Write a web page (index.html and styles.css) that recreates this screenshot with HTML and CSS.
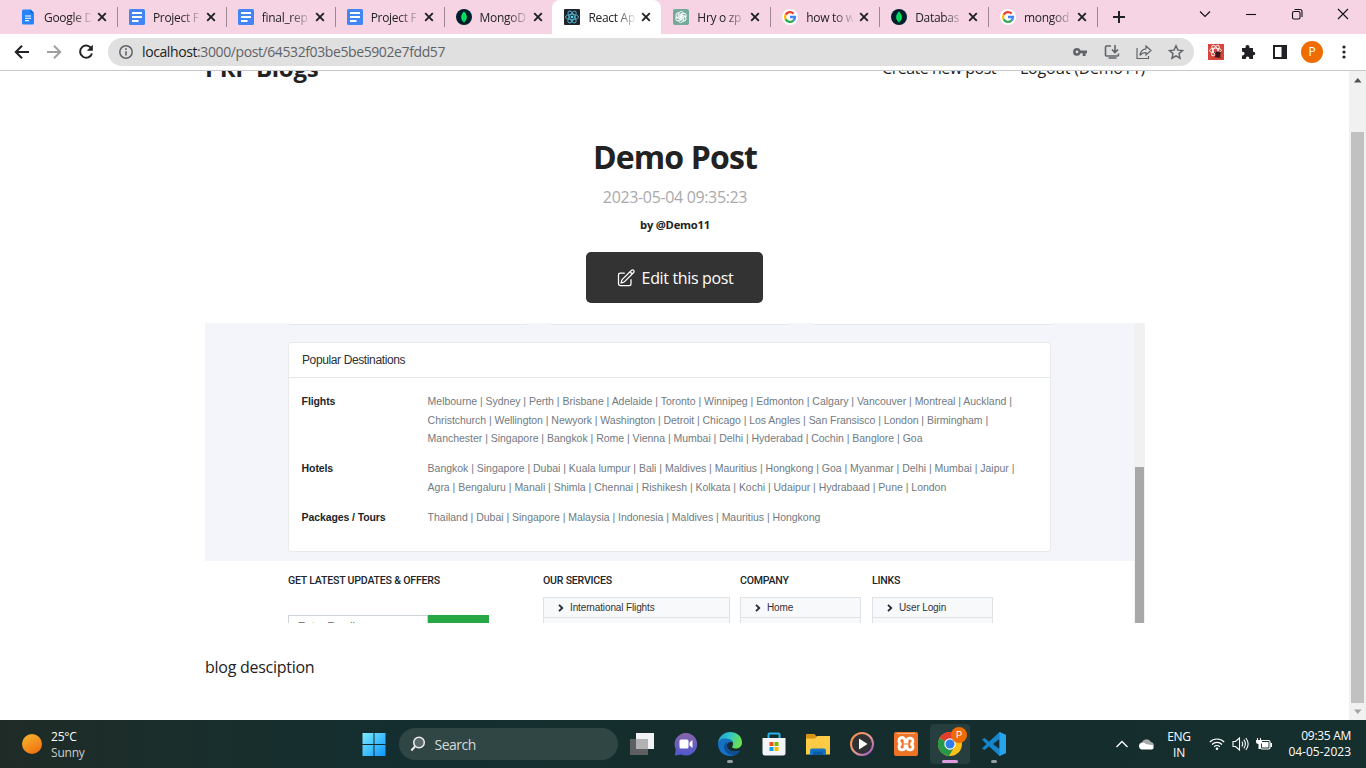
FILE: index.html
```html
<!DOCTYPE html>
<html lang="en">
<head>
<meta charset="utf-8">
<title>React App</title>
<link rel="stylesheet" href="styles.css">
</head>
<body>
<svg class="defs" width="0" height="0">
  <defs>
    <symbol id="doc" viewBox="0 0 16 16"><rect width="16" height="16" rx="1.5" fill="#4285f4"/><path d="M3 4h10M3 8h10M3 12h6.500" stroke="#fff" stroke-width="1.8"/></symbol>
    <symbol id="mongo" viewBox="0 0 16 16"><circle cx="8" cy="8" r="8" fill="#001e2b"/><path d="M8 2.500C12 6.500 11.500 10.500 8 13.500C4.500 10.500 4 6.500 8 2.500Z" fill="#00ed64"/><path d="M8 5v8.500" stroke="#00a34a" stroke-width=".8"/></symbol>
    <symbol id="google" viewBox="0 0 16 16"><circle cx="8" cy="8" r="8" fill="#fff"/><g fill="none" stroke-width="2.300"><path d="M11.600 4.600A5 5 0 0 0 3.600 5.700" stroke="#ea4335"/><path d="M3.600 5.700A5 5 0 0 0 3.600 10.300" stroke="#fbbc05"/><path d="M3.600 10.300A5 5 0 0 0 11.300 11.700" stroke="#34a853"/><path d="M11.300 11.700A5 5 0 0 0 13 8H8" stroke="#4285f4"/></g></symbol>
    <symbol id="x" viewBox="0 0 10 10"><path d="M1.200 1.200l7.600 7.600M8.800 1.200l-7.600 7.600" stroke="#202124" stroke-width="1.900"/></symbol>
    <symbol id="chev" viewBox="0 0 6 8"><path d="M1 .8l3.300 3.200L1 7.200" fill="none" stroke="#212b3a" stroke-width="1.800"/></symbol>
  </defs>
</svg>

<header class="tabs">
  <div class="tab"><svg class="fav" viewBox="0 0 16 16"><path d="M3.500 .5h7L14 4v10q0 1.500-1.500 1.500h-9Q2 15.500 2 14V2Q2 .5 3.500 .5Z" fill="#2684fc"/><path d="M10.500 .5L14 4h-3.500z" fill="#0066da"/><path d="M5 7h6M5 9.300h6M5 11.600h4" stroke="#fff" stroke-width="1.100"/></svg><span class="title">Google D</span><svg class="x"><use href="#x"/></svg></div>
  <div class="tab"><svg class="fav"><use href="#doc"/></svg><span class="title">Project F</span><svg class="x"><use href="#x"/></svg></div>
  <div class="tab"><svg class="fav"><use href="#doc"/></svg><span class="title">final_rep</span><svg class="x"><use href="#x"/></svg></div>
  <div class="tab"><svg class="fav"><use href="#doc"/></svg><span class="title">Project F</span><svg class="x"><use href="#x"/></svg></div>
  <div class="tab last"><svg class="fav"><use href="#mongo"/></svg><span class="title">MongoD</span><svg class="x"><use href="#x"/></svg></div>
  <div class="tab active"><svg class="fav" viewBox="0 0 16 16"><rect width="16" height="16" rx="1" fill="#20232a"/><g fill="none" stroke="#4fb3cf" stroke-width=".9"><ellipse cx="8" cy="8" rx="6.600" ry="2.600"/><ellipse cx="8" cy="8" rx="6.600" ry="2.600" transform="rotate(60 8 8)"/><ellipse cx="8" cy="8" rx="6.600" ry="2.600" transform="rotate(120 8 8)"/></g><circle cx="8" cy="8" r="1.300" fill="#61dafb"/></svg><span class="title">React Ap</span><svg class="x"><use href="#x"/></svg></div>
  <div class="tab"><svg class="fav" viewBox="0 0 16 16"><rect width="16" height="16" rx="2" fill="#75a99c"/><g fill="none" stroke="#fff" stroke-width=".9"><path id="petal" d="M6 8V4.600Q6.200 2.400 8.300 2.500Q9.600 2.600 10.300 3.500L7.200 5.300V8.600"/><use href="#petal" transform="rotate(60 8 8)"/><use href="#petal" transform="rotate(120 8 8)"/><use href="#petal" transform="rotate(180 8 8)"/><use href="#petal" transform="rotate(240 8 8)"/><use href="#petal" transform="rotate(300 8 8)"/></g></svg><span class="title">Hry o zp</span><svg class="x"><use href="#x"/></svg></div>
  <div class="tab"><svg class="fav"><use href="#google"/></svg><span class="title">how to w</span><svg class="x"><use href="#x"/></svg></div>
  <div class="tab"><svg class="fav"><use href="#mongo"/></svg><span class="title">Databas</span><svg class="x"><use href="#x"/></svg></div>
  <div class="tab"><svg class="fav"><use href="#google"/></svg><span class="title">mongod</span><svg class="x"><use href="#x"/></svg></div>
  <svg class="plus" viewBox="0 0 12 12"><path d="M6 0v12M0 6h12" stroke="#202124" stroke-width="2"/></svg>
  <div class="win">
    <svg width="12" height="12" viewBox="0 0 12 12"><path d="M1 3.500l5 5 5-5" /></svg>
    <svg width="12" height="12" viewBox="0 0 12 12"><path d="M1 6.500h10"/></svg>
    <svg width="12" height="12" viewBox="0 0 12 12"><rect x="1.500" y="3.500" width="7.500" height="7.500" rx="1.500"/><path d="M3.500 1.500H9q2 0 2 2V9"/></svg>
    <svg width="12" height="12" viewBox="0 0 12 12"><path d="M1 1l10 10M11 1L1 11"/></svg>
  </div>
</header>

<nav class="toolbar">
  <svg width="16" height="16" viewBox="0 0 16 16"><path d="M15 8H2M8 1.800L1.800 8 8 14.200" stroke="#202124"/></svg>
  <svg width="16" height="16" viewBox="0 0 16 16"><path d="M1 8h13M8 1.800L14.200 8 8 14.200" stroke="#a0a0a2"/></svg>
  <svg width="16" height="16" viewBox="0 0 16 16"><path d="M13.600 4.800A6.100 6.100 0 1 0 14 9.500" stroke="#202124"/><path d="M14.800 .8v6H8.800z" fill="#202124" stroke="none"/></svg>
  <div class="omnibox">
    <svg width="14" height="14" viewBox="0 0 14 14"><circle cx="7" cy="7" r="6.200" stroke="#5f6368" stroke-width="1.500" fill="none"/><path d="M7 6.200v4.300M7 3.300v1.600" stroke="#5f6368" stroke-width="1.600"/></svg>
    <span class="url"><b>localhost</b>:3000/post/64532f03be5be5902e7fdd57</span>
    <svg width="16" height="16" viewBox="0 0 16 16"><path fill-rule="evenodd" d="M5 4A3.900 3.900 0 1 0 8.600 9.300H10.700V12H13.600V9.300H15V6.400H8.600A3.900 3.900 0 0 0 5 4ZM5 6.500A1.400 1.400 0 1 1 5 9.300A1.400 1.400 0 1 1 5 6.500Z" fill="#5f6368"/></svg>
    <svg width="16" height="16" viewBox="0 0 16 16"><path d="M7 2H2.500Q1.500 2 1.500 3v8q0 1 1 1h11q1 0 1-1V9.500M4.500 14h8M11 1v7M8 5.500l3 3 3-3" fill="none" stroke="#5f6368" stroke-width="1.600"/></svg>
    <svg width="16" height="16" viewBox="0 0 16 16"><path d="M1 4v10.500h11.500V12M10 2l5 4.500-5 4.500V8.500Q6 8.500 4 11.500Q4.500 5.500 10 4.800Z" fill="none" stroke="#5f6368" stroke-width="1.200"/></svg>
    <svg width="16" height="16" viewBox="0 0 16 16"><path d="M8 1.800l1.900 4.300 4.700.4-3.600 3.100 1.100 4.600L8 11.800l-4.100 2.400L5 9.600 1.400 6.500l4.700-.4z" fill="none" stroke="#5f6368" stroke-width="1.400"/></svg>
  </div>
  <div class="ext">
    <svg width="16" height="16" viewBox="0 0 16 16"><rect width="16" height="16" fill="#d9453b"/><g fill="none" stroke="#fff" stroke-width=".9"><ellipse cx="7.500" cy="6.500" rx="6" ry="2.300"/><ellipse cx="7.500" cy="6.500" rx="6" ry="2.300" transform="rotate(60 7.500 6.500)"/><ellipse cx="7.500" cy="6.500" rx="6" ry="2.300" transform="rotate(120 7.500 6.500)"/></g><ellipse cx="9.800" cy="10.500" rx="2.600" ry="3.300" fill="#3b1515"/><path d="M6 8l7 6M13.500 8l-7 5.500" stroke="#3b1515"/></svg>
    <svg width="16" height="16" viewBox="0 0 16 16"><path d="M2 4h3.500V3A2 2 0 0 1 9.500 3v1H13v3.700h.5a1.800 1.800 0 0 1 0 3.600H13V15H9.300v-.8a1.700 1.700 0 0 0-3.400 0v.8H2v-3.600h.8a1.800 1.800 0 0 0 0-3.600H2z" fill="#202124"/></svg>
    <svg width="16" height="16" viewBox="0 0 16 16"><rect x="2" y="2" width="12" height="12" fill="none" stroke="#202124" stroke-width="2"/><path d="M9.500 2H14v12H9.500z" fill="#202124"/></svg>
    <span class="avatar">P</span>
    <svg width="16" height="16" viewBox="0 0 16 16"><g fill="#202124"><circle cx="8" cy="3" r="1.600"/><circle cx="8" cy="8" r="1.600"/><circle cx="8" cy="13" r="1.600"/></g></svg>
  </div>
</nav>

<div class="viewport">
  <main class="page">
    <div class="site-head">
      <span class="brand">PRP Blogs</span>
      <span class="links"><span class="create">Create new post</span><span>Logout (Demo11)</span></span>
    </div>
    <h1>Demo Post</h1>
    <time>2023-05-04 09:35:23</time>
    <div class="author">by @Demo11</div>
    <div class="edit"><svg width="20" height="20" viewBox="0 0 24 24"><path d="M16.862 4.487l1.687-1.688a1.875 1.875 0 112.652 2.652L10.582 16.070a4.500 4.500 0 01-1.897 1.130L6 18l.8-2.685a4.500 4.500 0 011.130-1.897l8.932-8.931zm0 0L19.500 7.125M18 14v4.750A2.250 2.250 0 0115.750 21H5.250A2.250 2.250 0 013 18.750V8.250A2.250 2.250 0 015.250 6H10"/></svg><span>Edit this post</span></div>

    <div class="shot">
      <div class="shot-body">
        <div class="grey">
          <div class="stubs"><i></i><i></i><i></i></div>
          <section class="card">
            <div class="card-head"><span>Popular Destinations</span></div>
            <div class="rows">
              <b>Flights</b>
              <div><span>Melbourne | Sydney | Perth | Brisbane | Adelaide | Toronto | Winnipeg | Edmonton | Calgary | Vancouver | Montreal | Auckland |</span><span class="tight">Christchurch | Wellington | Newyork | Washington | Detroit | Chicago | Los Angles | San Fransisco | London | Birmingham |</span><span>Manchester | Singapore | Bangkok | Rome | Vienna | Mumbai | Delhi | Hyderabad | Cochin | Banglore | Goa</span></div>
              <b>Hotels</b>
              <div><span>Bangkok | Singapore | Dubai | Kuala lumpur | Bali | Maldives | Mauritius | Hongkong | Goa | Myanmar | Delhi | Mumbai | Jaipur |</span><span>Agra | Bengaluru | Manali | Shimla | Chennai | Rishikesh | Kolkata | Kochi | Udaipur | Hydrabaad | Pune | London</span></div>
              <b>Packages / Tours</b>
              <div><span>Thailand | Dubai | Singapore | Malaysia | Indonesia | Maldives | Mauritius | Hongkong</span></div>
            </div>
          </section>
        </div>
        <div class="foot">
          <div class="c1"><h4>GET LATEST UPDATES &amp; OFFERS</h4><div class="mail"><span>Enter Email</span><i></i></div></div>
          <div class="c2"><h4>OUR SERVICES</h4><p><svg><use href="#chev"/></svg>International Flights</p><p></p></div>
          <div class="c3"><h4>COMPANY</h4><p><svg><use href="#chev"/></svg>Home</p><p></p></div>
          <div class="c4"><h4>LINKS</h4><p><svg><use href="#chev"/></svg>User Login</p><p></p></div>
        </div>
      </div>
      <div class="shot-scroll"><i></i></div>
    </div>
    <p class="desc">blog desciption</p>
  </main>
  <div class="scroll">
    <svg width="17" height="17" viewBox="0 0 17 17"><path d="M5 11.500h7.500L8.750 7z" fill="#505050"/></svg>
    <i></i>
    <svg width="17" height="17" viewBox="0 0 17 17"><path d="M5 6.500h7.500L8.750 11z" fill="#a3a3a3"/></svg>
  </div>
</div>

<footer class="taskbar">
  <div class="weather"><i></i><div><span>25°C</span><span class="dim">Sunny</span></div></div>
  <div class="apps">
    <svg class="start" width="24" height="24" viewBox="0 0 24 24"><defs><linearGradient id="wg" x1="0" y1="0" x2="24" y2="24" gradientUnits="userSpaceOnUse"><stop stop-color="#80f0ff"/><stop offset="1" stop-color="#0a94ff"/></linearGradient></defs><path d="M.500 1h11v11H.500zM12.500 1h11v11h-11zM.500 13h11v11H.500zM12.500 13h11v11h-11z" fill="url(#wg)"/></svg>
    <div class="search"><svg width="16" height="16" viewBox="0 0 16 16"><circle cx="9" cy="6.500" r="5.300" fill="#5a6a6a" stroke="#eee" stroke-width="1.500"/><path d="M5 10.500L1.300 14.500" stroke="#eee" stroke-width="1.900"/></svg><span>Search</span></div>
    <div class="icons">
      <div><svg viewBox="0 0 24 24"><path d="M6 1h18v16H6z" fill="#f2f2f2"/><path d="M0 7h18v16H0z" fill="#5d5f60"/><path d="M6 7h12v10H6z" fill="#b0b3b3"/></svg></div>
      <div><svg viewBox="0 0 24 24"><defs><linearGradient id="ch" x1="0" y1="0" x2="0" y2="1"><stop stop-color="#8a64a8"/><stop offset="1" stop-color="#5058d0"/></linearGradient></defs><path d="M12 1a11.300 11.300 0 1 1-5 21.500L.800 23.500l1-6A11.300 11.300 0 0 1 12 1z" fill="url(#ch)"/><rect x="5.500" y="7.500" width="9" height="9" rx="1.500" fill="#fff"/><path d="M15.500 10.500l3-2.500v8l-3-2.500z" fill="#fff"/></svg></div>
      <div class="run"><svg viewBox="0 0 24 24"><defs><linearGradient id="ed" x1="0" y1="0" x2="1" y2=".3"><stop stop-color="#1b9be0"/><stop offset=".5" stop-color="#30c5cb"/><stop offset="1" stop-color="#69e056"/></linearGradient></defs><path d="M0 11C1 4 6 0 12 0c7 0 12 4.500 12 10.500 0 4-3 6-6.500 6-3 0-4-1.300-3-2.500 1.500-2.500 0-6.500-4-6.500C6 7.500 2 8 0 11z" fill="url(#ed)"/><path d="M0 12C0 8 4 6 8 6.500c4 .3 6 2 6.500 4C11.500 9 8.500 11 9 14.500c.6 4 6 6.500 13 4C19 23 15 24 12 24 5 24 0 19 0 12z" fill="#1571c4"/><path d="M9 10C6 12 5 15 7 18.500 9 22 13 24 17 22.800c2.500-1 4-2.300 5-4.300-7 2.800-12.500 0-13.200-4z" fill="#0e4f95"/></svg></div>
      <div><svg viewBox="0 0 24 24"><path d="M6.500 6V2.500q0-1 1-1h9q1 0 1 1V6" fill="none" stroke="#27b5ed" stroke-width="2"/><path d="M.500 6h23v15q0 2.500-2.500 2.500H3Q.500 23.500 .500 21z" fill="#f4f5f6"/><path d="M7.500 10h4v4h-4z" fill="#f04f24"/><path d="M12.500 10h4v4h-4z" fill="#7fba00"/><path d="M7.500 15h4v4h-4z" fill="#08a3ee"/><path d="M12.500 15h4v4h-4z" fill="#ffb900"/></svg></div>
      <div><svg viewBox="0 0 24 24"><path d="M0 3q0-1 1-1h7.500l2 2.500V9H0z" fill="#d69413"/><path d="M0 6.500h9l2-2.500h13v18.500H0z" fill="#fdcb45"/><path d="M4 23v-4.500q0-2 2-2h12q2 0 2 2V23z" fill="#1475c4"/><path d="M7 19.500h10V23H7z" fill="#0b5ba8"/></svg></div>
      <div><svg viewBox="0 0 24 24"><defs><linearGradient id="mp" x1="0" y1="0" x2="1" y2="1"><stop stop-color="#ff8a3c"/><stop offset=".5" stop-color="#e9a090"/><stop offset="1" stop-color="#9a50d0"/></linearGradient></defs><circle cx="12" cy="12" r="11" fill="#303133" stroke="url(#mp)" stroke-width="2"/><path d="M9 6.500l8.500 5.500L9 17.500z" fill="#fff"/></svg></div>
      <div><svg viewBox="0 0 24 24"><rect width="24" height="24" rx="2" fill="#ed7426"/><path d="M3 1.500h18" stroke="#f5b088"/><path d="M8 5.500a3 3 0 0 1 3 3v1.500h2V8.500a3 3 0 1 1 3.500 3.500 3 3 0 1 1-3.500 3.500V14h-2v1.500A3 3 0 1 1 7.500 12A3.300 3.300 0 0 1 8 5.500z" fill="none" stroke="#fff" stroke-width="2.800"/></svg></div>
      <div class="on"><svg viewBox="0 0 24 24"><circle cx="12" cy="12" r="12" fill="#fbc116"/><path d="M12 12L1.600 6A12 12 0 0 1 22.400 6z" fill="#e33b2e"/><path d="M12 12L1.600 6A12 12 0 0 0 11 24l5.500-9.500z" fill="#279847"/><path d="M12 6.500H22.500L20 3.500H12z" fill="#e33b2e"/><circle cx="12" cy="12" r="5.700" fill="#fff"/><circle cx="12" cy="12" r="4.500" fill="#2f7de9"/></svg><em>P</em></div>
      <div class="run"><svg viewBox="0 0 24 24"><path d="M17.500 0L24 3v18l-6.500 3L7 14.300 2.500 18 0 16.500 4.500 12 0 7.500 2.500 6 7 9.700zM17.500 7L11 12l6.500 5z" fill="#1585cc" fill-rule="evenodd"/><path d="M17.500 0L24 3v18l-6.500 3z" fill="#2aa3ee"/></svg></div>
    </div>
  </div>
  <div class="tray">
    <svg width="14" height="16" viewBox="0 0 14 16"><path d="M1.500 11L7 5.500l5.500 5.500" fill="none" stroke="#fff" stroke-width="1.300"/></svg>
    <svg class="cloud" width="17" height="14" viewBox="0 0 17 14"><path d="M1 8a4 4 0 0 1 3-3 5 5 0 0 1 9 0 4 4 0 0 1 3 4H1z" fill="#a5aaaa"/><path d="M3.500 12.500a3.300 3.300 0 0 1-1.500-5.500Q5 4.500 8 7l5.500 1a2.300 2.300 0 0 1 .5 4.500z" fill="#fff"/></svg>
    <div class="lang"><span>ENG</span><span>IN</span></div>
    <svg class="wifi" width="16" height="14" viewBox="0 0 16 14"><g fill="none" stroke="#fff" stroke-width="1.200"><path d="M.800 5a10.200 10.200 0 0 1 14.400 0M3 7.500a7 7 0 0 1 10 0M5.200 9.800a4 4 0 0 1 5.600 0"/></g><circle cx="8" cy="11.800" r="1.300" fill="#fff"/></svg>
    <svg class="vol" width="17" height="16" viewBox="0 0 17 16"><g fill="none" stroke="#fff" stroke-width="1.100"><path d="M1 5.500h2.500L7.500 2v12L3.500 10.500H1zM9.800 5.500q1.800 2.500 0 5M11.800 3.700q3.200 4.300 0 8.600M13.800 2q4.700 6 0 12"/></g></svg>
    <svg width="16" height="14" viewBox="0 0 16 14"><rect x="4.500" y="3.500" width="9.500" height="8.500" rx="1.500" fill="none" stroke="#fff" stroke-width="1.200"/><path d="M6 5h6.500v5.500H6zM14.500 6H16v4h-1.500zM0 3h6v2.500Q6 7 4 7v5H2.500V7Q0 7 0 5zM1 1h1v2H1zM4 1h1v2H4z" fill="#fff"/></svg>
    <div class="clock"><span>09:35 AM</span><span class="date">04-05-2023</span></div>
  </div>
</footer>
</body>
</html>
```
FILE: styles.css
```css
* { box-sizing: border-box; }
body { margin: 0; width: 1366px; height: 768px; overflow: hidden; display: flex; flex-direction: column; background: #fff; color: #222; font-family: "Open Sans", "Noto Sans", sans-serif; }
.defs { position: absolute; }
svg { display: block; flex: none; }

/* tab strip */
.tabs { height: 34px; flex: none; background: #f6d4e4; display: flex; align-items: center; padding-left: 8px; }
.tab { width: 108.9px; height: 34px; flex: none; display: flex; align-items: center; padding-left: 12px; position: relative; }
.tab::after { content: ""; width: 1px; height: 20px; background: #9c868f; position: absolute; right: -1px; top: 7px; }
.tab.last::after, .tab.active::after { display: none; }
.tab.active { background: #fff; border-radius: 8px 8px 0 0; }
.fav { width: 16px; height: 16px; margin-right: 8px; }
.title { width: 47px; font-size: 12px; letter-spacing: -0.3px; white-space: nowrap; overflow: hidden; -webkit-mask-image: linear-gradient(90deg, #000 60%, transparent 105%); mask-image: linear-gradient(90deg, #000 60%, transparent 105%); }
.x { width: 10px; height: 10px; margin-left: 6px; }
.plus { width: 12px; height: 12px; margin-left: 16px; }
.win { margin-left: auto; display: flex; gap: 34px; padding-right: 17px; margin-top: -6px; }
.win path, .win rect { fill: none; stroke: #111; stroke-width: 1.1; }

/* address bar */
.toolbar { height: 37px; flex: none; border-bottom: 1px solid #c8c8c8; display: flex; align-items: center; padding-left: 14px; gap: 16px; }
.toolbar > svg { fill: none; stroke-width: 2; }
.omnibox { width: 1086px; height: 28px; margin-left: -2px; border-radius: 14px; background: #e0e0e0; display: flex; align-items: center; padding: 0 10px 0 11px; gap: 16px; }
.url { flex: 1; margin: -2px 0 0 -7px; font-size: 14px; color: #5f6368; letter-spacing: -0.4px; white-space: nowrap; }
.url b { font-weight: 400; color: #202124; }
.ext { display: flex; align-items: center; gap: 16px; margin-left: -2px; }
.avatar { width: 22px; height: 22px; margin: 0 -3px; border-radius: 50%; background: #ef6c00; color: #fff; font-size: 12px; line-height: 22px; text-align: center; }

/* blog page */
.viewport { flex: 1; min-height: 0; display: flex; overflow: hidden; }
.page { width: 1349px; padding: 0 204px 0 205px; display: flex; flex-direction: column; align-items: center; }
.site-head { width: 940px; height: 34px; margin-top: -20px; flex: none; display: flex; justify-content: space-between; align-items: center; line-height: 34px; }
.brand { font-size: 24px; font-weight: 700; letter-spacing: -0.3px; }
.links { display: flex; gap: 24px; font-size: 16px; letter-spacing: -0.25px; }
.create { letter-spacing: -0.5px; }
h1 { margin: 49px 0 0; font-size: 32px; line-height: 46px; font-weight: 700; letter-spacing: -0.85px; }
time { font-size: 16px; line-height: 24px; margin-top: 5px; color: #aaa; letter-spacing: -0.35px; }
.author { font-size: 11.2px; line-height: 16px; margin-top: 8px; font-weight: 700; letter-spacing: -0.2px; }
.edit { width: 177px; height: 51px; margin: 19px 1px 0 0; flex: none; border-radius: 5px; background: #333; color: #fff; display: flex; align-items: center; justify-content: center; gap: 6px; font-size: 16px; letter-spacing: -0.35px; }
.edit svg { fill: none; stroke: #fff; stroke-width: 1.5; stroke-linejoin: round; stroke-linecap: round; }
.desc { align-self: flex-start; margin: 31px 0 0; font-size: 16px; line-height: 26px; letter-spacing: -0.27px; }

/* article picture */
.shot { width: 940px; height: 300px; margin-top: 20px; flex: none; overflow: hidden; display: flex; font-family: "Liberation Sans", Arial, sans-serif; }
.shot-body { width: 929px; }
.shot-scroll { width: 11px; background: #f1f1f1; padding: 144px 1px 0 1px; }
.shot-scroll i { display: block; height: 156px; background: #a8a8a8; }
.grey { height: 238px; background: #f4f5fa; padding-left: 83px; }
.stubs { width: 764px; height: 19px; display: flex; justify-content: space-between; }
.stubs i { width: 240px; height: 2px; border: 1px solid #e5eaee; border-top: 0; border-radius: 0 0 3px 3px; background: #fff; }
.card { width: 763px; height: 210px; border: 1px solid #e8eaec; border-radius: 3px; background: #fff; }
.card-head { height: 35px; border-bottom: 1px solid #e6e9ec; padding-left: 13px; font-size: 12px; line-height: 34px; letter-spacing: -0.38px; color: #2c3036; }
.rows { display: grid; grid-template-columns: 126px auto; padding: 14px 0 0 12.600px; row-gap: 11.300px; font-size: 10.500px; line-height: 18.600px; letter-spacing: -0.02px; color: #717a82; }
.rows b { color: #212529; letter-spacing: -0.1px; }
.rows span { display: block; white-space: nowrap; }
.rows .tight { letter-spacing: -0.04px; }
.foot { display: flex; padding: 12px 0 0 83px; font-size: 10px; }
.foot h4 { margin: 0 0 8px; font-family: Roboto, sans-serif; font-size: 10.600px; line-height: 16px; font-weight: 500; letter-spacing: -0.22px; color: #212529; white-space: nowrap; }
.foot p { margin: 0; height: 20px; border: 1px solid #dfe3e6; border-bottom: 0; background: #f8f9fb; display: flex; align-items: center; padding-left: 14px; letter-spacing: -0.13px; color: #333; white-space: nowrap; }
.foot p svg { width: 6px; height: 8px; margin-right: 6px; }
.c1 { width: 201px; margin-right: 54px; }
.c2 { width: 187px; margin-right: 10px; }
.c3 { width: 121px; margin-right: 11px; }
.c4 { width: 121px; }
.mail { margin-top: 26px; display: flex; height: 28px; line-height: 20px; color: #666; }
.mail span { width: 140px; border: 1px solid #ced4da; padding-left: 9px; font-size: 11px; }
.mail i { width: 61px; background: #28a745; }

/* page scrollbar */
.scroll { width: 17px; background: #f1f1f1; display: flex; flex-direction: column; }
.scroll i { width: 13px; height: 571px; margin: 44px 2px 0; background: #c1c1c1; }

/* taskbar */
.taskbar { height: 48px; flex: none; display: flex; align-items: center; background: linear-gradient(90deg, #1f2b26 0, #192e2c 200px, #142e30 400px, #152d2c 700px, #152e2e 1366px); color: #fff; font-size: 12px; }
.weather { width: 361.500px; display: flex; align-items: center; padding-left: 22px; gap: 9px; line-height: 16px; }
.weather i { width: 20px; height: 20px; border-radius: 50%; background: linear-gradient(150deg, #f6b92e, #f0680c); }
.weather span, .lang span, .clock span { display: block; }
.weather div { padding-top: 2px; letter-spacing: -0.2px; }
.dim { color: #c8cfcd; }
.apps { display: flex; align-items: center; }
.search { width: 219px; height: 32px; margin-left: 13px; border-radius: 16px; background: #304644; display: flex; align-items: center; padding-left: 11px; gap: 9px; font-size: 14px; color: #d5dbd9; letter-spacing: -0.5px; }
.icons { display: flex; margin-left: 4.500px; }
.icons div { width: 40px; height: 40px; margin-right: 4px; display: flex; align-items: center; justify-content: center; border-radius: 4px; position: relative; }
.icons svg { width: 24px; height: 24px; }
.run::after, .on::after { content: ""; width: 6px; height: 3px; border-radius: 2px; background: #96a09f; position: absolute; bottom: 1px; left: 17px; }
.icons .on { background: #263e3e; }
.icons .on::after { width: 16px; left: 12px; background: #e09adf; }
.on em { position: absolute; left: 21px; top: 3px; width: 16px; height: 16px; border-radius: 50%; background: #ef6c00; font: 9.500px/16px Roboto, sans-serif; text-align: center; }
.tray { margin-left: auto; display: flex; align-items: center; padding-right: 15px; line-height: 16px; }
.cloud { margin-left: 9px; }
.lang { width: 24px; margin: 1px 18px 0 12px; text-align: center; letter-spacing: -0.3px; }
.vol { margin: 0 7px; }
.clock { width: 79px; text-align: right; letter-spacing: -0.3px; white-space: nowrap; }
.clock .date { letter-spacing: 0; }
```
